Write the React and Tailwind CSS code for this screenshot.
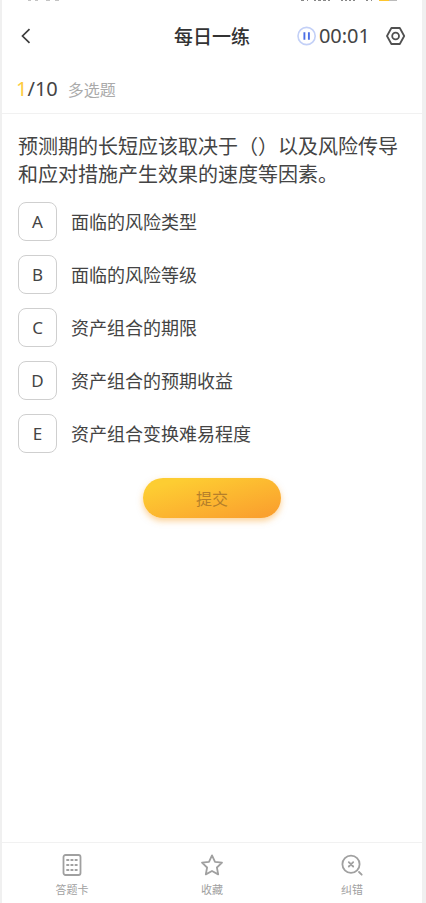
import React from "react";

const options = [
  { key: "A", text: "面临的风险类型" },
  { key: "B", text: "面临的风险等级" },
  { key: "C", text: "资产组合的期限" },
  { key: "D", text: "资产组合的预期收益" },
  { key: "E", text: "资产组合变换难易程度" },
];

function StatusBar() {
  return (
    <div className="flex h-1 items-start justify-between pr-6 pl-6" aria-hidden="true">
      <svg width="36" height="4" viewBox="0 0 36 4" fill="#c4c4c4">
        <path d="M2 0h3v1H2zM9 0h3v1H9zM20 0h4v1h-4zM29 0h4v1h-4z" />
      </svg>
      <svg width="98" height="4" viewBox="0 0 98 4">
        <path
          d="M1 0h3v1H1zM7 0h1v1H7zM14 0h2v1h-2zM18 0h3v1h-3zM23 0h3v1h-3zM28 0h2v1h-2zM41 0h2v1h-2zM45 0h2v1h-2zM49 0h2v1h-2zM53 0h2v1h-2zM66 0h2v1h-2zM71 0h1v1h-1z"
          fill="#888"
        />
        <path d="M79 0h10v1H79z" fill="#fdc52e" />
        <path d="M89 0h8v1h-8z" fill="#bbb" />
      </svg>
    </div>
  );
}

function Header() {
  return (
    <header className="grid h-16 grid-cols-[1fr_auto_1fr] items-center pr-4 pl-4">
      <button type="button" aria-label="返回" className="flex h-8 w-5 items-center">
        <svg width="16" height="18" viewBox="0 0 16 18" fill="none" stroke="#3c3c3c" strokeWidth="1.7">
          <path d="M11.5 2.2 4.5 9l7 6.8" />
        </svg>
      </button>
      <h1 className="text-[19px] font-medium text-[#333]">每日一练</h1>
      <div className="flex items-center justify-end">
        <button type="button" aria-label="暂停" className="mr-0.5">
          <svg width="20" height="20" viewBox="0 0 20 20" fill="none">
            <circle cx="9.6" cy="10" r="8.6" stroke="#c3d0f7" strokeWidth="1.6" />
            <path d="M7.4 6.2v7.6M11.9 6.2v7.6" stroke="#4c6fe6" strokeWidth="1.9" />
          </svg>
        </button>
        <time className="font-['Noto_Sans',sans-serif] text-xl text-[#444]">00:01</time>
        <button type="button" aria-label="设置" className="ml-4">
          <svg width="20" height="20" viewBox="0 0 20 20" fill="none" stroke="#505050" strokeWidth="1.8" strokeLinejoin="round">
            <path d="M5.4 2h8.4L18.2 10l-4.4 8H5.4L1 10z" />
            <circle cx="9.6" cy="10" r="3.4" />
          </svg>
        </button>
      </div>
    </header>
  );
}

function NavItem({ label, children }) {
  return (
    <button type="button" className="flex flex-1 flex-col items-center gap-1 pt-2.5 text-[11px] leading-4 text-[#a0a0a0]">
      <svg width="24" height="24" viewBox="0 0 24 24" fill="none" stroke="#a0a0a0" strokeWidth="1.8" strokeLinejoin="round" strokeLinecap="round" aria-hidden="true">
        {children}
      </svg>
      {label}
    </button>
  );
}

export default function App() {
  return (
    <div className="flex min-h-screen flex-col border-r-4 border-l-2 border-[#f0f0f0] bg-white font-['Noto_Sans_CJK_SC',sans-serif] text-[#444]">
      <StatusBar />
      <Header />
      <div className="flex h-[46px] items-center gap-2.5 border-b border-[#f1f1f1] pb-1 pl-3.5">
        <p className="font-['Noto_Sans',sans-serif] text-xl">
          <span className="text-[#fdcb3c]">1</span>/10
        </p>
        <p className="text-base text-[#aaa]">多选题</p>
      </div>
      <main className="flex flex-1 flex-col pr-4 pl-4">
        <form className="flex flex-col">
          <p className="-mr-1 pt-4.5 pb-3.5 text-xl leading-7">
            预测期的长短应该取决于（）以及风险传导和应对措施产生效果的速度等因素。
          </p>
          <div className="flex flex-col gap-3.5">
            {options.map((o) => (
              <label key={o.key} className="flex h-[39px] items-center gap-3.5">
                <input type="checkbox" name="answer" value={o.key} className="peer sr-only" />
                <span className="flex h-[39px] w-[39px] items-center justify-center rounded-lg border border-[#cfcfcf] font-['Noto_Sans',sans-serif] text-[17px] leading-none">
                  {o.key}
                </span>
                <span className="pb-0.5 text-lg leading-none">{o.text}</span>
              </label>
            ))}
          </div>
          <button
            type="button"
            className="mt-[25px] h-10 w-[138px] self-center rounded-full bg-linear-165 from-[#fdcd32] from-15% to-[#faa12e] to-90% text-base text-[#b57f2a] shadow-[0_3px_6px_rgba(250,165,50,0.5)]"
          >
            提交
          </button>
        </form>
      </main>
      <nav className="flex h-[61px] border-t border-[#f1f1f1]">
        <NavItem label="答题卡">
          <rect x="3.5" y="2" width="17" height="20" rx="2" />
          <path d="M7 7h1.500M11.200 7h1.500M15.400 7h1.500M7 12h1.500M11.200 12h1.500M15.400 12h1.500M7 17h1.500M11.200 17h1.500M15.400 17h1.500" />
        </NavItem>
        <NavItem label="收藏">
          <path d="m12 2.400 3 6.400 7 .9-5.100 4.800 1.300 6.900L12 18l-6.200 3.400 1.300-6.900L2 9.700l7-.9z" />
        </NavItem>
        <NavItem label="纠错">
          <circle cx="11" cy="11.3" r="8.6" />
          <path d="m8.800 9.100 4.400 4.400M13.200 9.100l-4.400 4.400M19 19l2.700 2.700" />
        </NavItem>
      </nav>
    </div>
  );
}
